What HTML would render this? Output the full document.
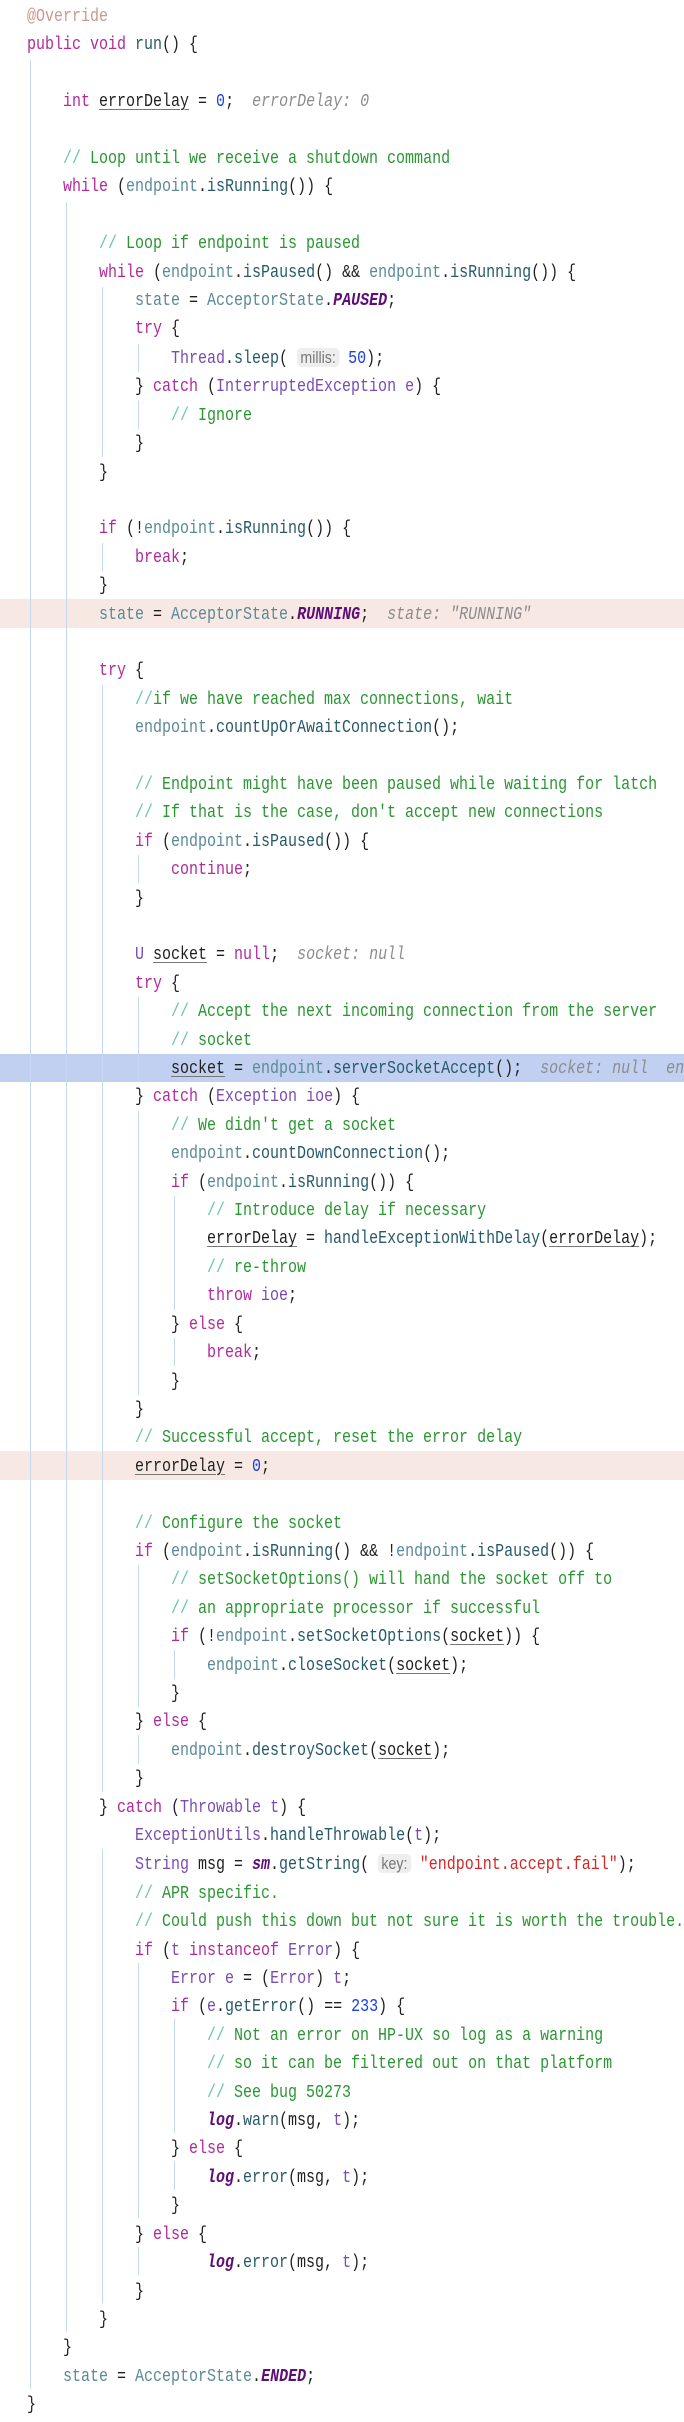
<!DOCTYPE html>
<html><head><meta charset="utf-8"><style>
html,body{margin:0;padding:0;background:#fff;width:684px;height:2422px;overflow:hidden;position:relative}
pre{position:absolute;left:27px;top:3px;margin:0;font-family:"Liberation Mono",monospace;font-size:18px;line-height:28.4px;color:#1f1f1f;transform:scaleX(0.8333);transform-origin:0 0;width:788px;overflow:hidden;z-index:2}
.hl{position:absolute;left:0;width:684px;height:28.4px;z-index:0}
.g{position:absolute;width:1px;background:#c4d7f7;z-index:1}
.k{color:#b02a9c}.c{color:#2a9632}.sl{color:#6cc3b0}.t{color:#7a4bb3}.v{color:#5a8a97}.m{color:#275a69}.n{color:#1a3fe0}.s{color:#d42828}
.cst{color:#5e0f77;font-style:italic;font-weight:bold}.h{color:#8c8c8c;font-style:italic}.an{color:#c89a90}
.u{text-decoration:underline;text-decoration-color:#777;text-underline-offset:3px}
.p{font-family:"Liberation Sans",sans-serif;color:#777;background:#eeeeee;border-radius:5px;padding:0 4px;font-size:17px}
</style></head><body>
<div class="hl" style="top:599.4px;background:#f7e8e3"></div>
<div class="hl" style="top:1053.8px;background:#c1d0f0"></div>
<div class="hl" style="top:1451.4px;background:#f7e8e3"></div>
<div class="g" style="left:30px;top:59.8px;height:2329px"></div>
<div class="g" style="left:66px;top:201.8px;height:2130px"></div>
<div class="g" style="left:102px;top:287px;height:170.4px"></div>
<div class="g" style="left:138px;top:343.8px;height:28.4px"></div>
<div class="g" style="left:138px;top:400.6px;height:28.4px"></div>
<div class="g" style="left:102px;top:542.6px;height:28.4px"></div>
<div class="g" style="left:102px;top:684.6px;height:1107.6px"></div>
<div class="g" style="left:138px;top:855px;height:28.4px"></div>
<div class="g" style="left:138px;top:997px;height:85.2px"></div>
<div class="g" style="left:138px;top:1110.6px;height:284px"></div>
<div class="g" style="left:174px;top:1196px;height:113.6px"></div>
<div class="g" style="left:174px;top:1337.6px;height:28.4px"></div>
<div class="g" style="left:138px;top:1565px;height:142px"></div>
<div class="g" style="left:174px;top:1650.2px;height:28.4px"></div>
<div class="g" style="left:138px;top:1735.4px;height:28.4px"></div>
<div class="g" style="left:102px;top:1849px;height:454.4px"></div>
<div class="g" style="left:138px;top:1962.6px;height:255.6px"></div>
<div class="g" style="left:174px;top:2019.4px;height:113.6px"></div>
<div class="g" style="left:174px;top:2161.4px;height:28.4px"></div>
<div class="g" style="left:138px;top:2246.6px;height:28.4px"></div>
<pre><span class="an">@Override</span>
<span class="k">public void</span> <span class="m">run</span>() {

    <span class="k">int</span> <span class="u">errorDelay</span> = <span class="n">0</span>;  <span class="h">errorDelay: 0</span>

    <span class="sl">//</span><span class="c"> Loop until we receive a shutdown command</span>
    <span class="k">while</span> (<span class="v">endpoint</span>.<span class="m">isRunning</span>()) {

        <span class="sl">//</span><span class="c"> Loop if endpoint is paused</span>
        <span class="k">while</span> (<span class="v">endpoint</span>.<span class="m">isPaused</span>() &amp;&amp; <span class="v">endpoint</span>.<span class="m">isRunning</span>()) {
            <span class="v">state</span> = <span class="v">AcceptorState</span>.<span class="cst">PAUSED</span>;
            <span class="k">try</span> {
                <span class="t">Thread</span>.<span class="m">sleep</span>( <span class="p">millis:</span> <span class="n">50</span>);
            } <span class="k">catch</span> (<span class="t">InterruptedException</span> <span class="t">e</span>) {
                <span class="sl">//</span><span class="c"> Ignore</span>
            }
        }

        <span class="k">if</span> (!<span class="v">endpoint</span>.<span class="m">isRunning</span>()) {
            <span class="k">break</span>;
        }
        <span class="v">state</span> = <span class="v">AcceptorState</span>.<span class="cst">RUNNING</span>;  <span class="h">state: "RUNNING"</span>

        <span class="k">try</span> {
            <span class="sl">//</span><span class="c">if we have reached max connections, wait</span>
            <span class="v">endpoint</span>.<span class="m">countUpOrAwaitConnection</span>();

            <span class="sl">//</span><span class="c"> Endpoint might have been paused while waiting for latch</span>
            <span class="sl">//</span><span class="c"> If that is the case, don't accept new connections</span>
            <span class="k">if</span> (<span class="v">endpoint</span>.<span class="m">isPaused</span>()) {
                <span class="k">continue</span>;
            }

            <span class="t">U</span> <span class="u">socket</span> = <span class="k">null</span>;  <span class="h">socket: null</span>
            <span class="k">try</span> {
                <span class="sl">//</span><span class="c"> Accept the next incoming connection from the server</span>
                <span class="sl">//</span><span class="c"> socket</span>
                <span class="u">socket</span> = <span class="v">endpoint</span>.<span class="m">serverSocketAccept</span>();  <span class="h">socket: null  en</span>
            } <span class="k">catch</span> (<span class="t">Exception</span> <span class="t">ioe</span>) {
                <span class="sl">//</span><span class="c"> We didn't get a socket</span>
                <span class="v">endpoint</span>.<span class="m">countDownConnection</span>();
                <span class="k">if</span> (<span class="v">endpoint</span>.<span class="m">isRunning</span>()) {
                    <span class="sl">//</span><span class="c"> Introduce delay if necessary</span>
                    <span class="u">errorDelay</span> = <span class="m">handleExceptionWithDelay</span>(<span class="u">errorDelay</span>);
                    <span class="sl">//</span><span class="c"> re-throw</span>
                    <span class="k">throw</span> <span class="t">ioe</span>;
                } <span class="k">else</span> {
                    <span class="k">break</span>;
                }
            }
            <span class="sl">//</span><span class="c"> Successful accept, reset the error delay</span>
            <span class="u">errorDelay</span> = <span class="n">0</span>;

            <span class="sl">//</span><span class="c"> Configure the socket</span>
            <span class="k">if</span> (<span class="v">endpoint</span>.<span class="m">isRunning</span>() &amp;&amp; !<span class="v">endpoint</span>.<span class="m">isPaused</span>()) {
                <span class="sl">//</span><span class="c"> setSocketOptions() will hand the socket off to</span>
                <span class="sl">//</span><span class="c"> an appropriate processor if successful</span>
                <span class="k">if</span> (!<span class="v">endpoint</span>.<span class="m">setSocketOptions</span>(<span class="u">socket</span>)) {
                    <span class="v">endpoint</span>.<span class="m">closeSocket</span>(<span class="u">socket</span>);
                }
            } <span class="k">else</span> {
                <span class="v">endpoint</span>.<span class="m">destroySocket</span>(<span class="u">socket</span>);
            }
        } <span class="k">catch</span> (<span class="t">Throwable</span> <span class="t">t</span>) {
            <span class="t">ExceptionUtils</span>.<span class="m">handleThrowable</span>(<span class="t">t</span>);
            <span class="t">String</span> msg = <span class="cst">sm</span>.<span class="m">getString</span>( <span class="p">key:</span> <span class="s">"endpoint.accept.fail"</span>);
            <span class="sl">//</span><span class="c"> APR specific.</span>
            <span class="sl">//</span><span class="c"> Could push this down but not sure it is worth the trouble.</span>
            <span class="k">if</span> (<span class="t">t</span> <span class="k">instanceof</span> <span class="t">Error</span>) {
                <span class="t">Error</span> <span class="t">e</span> = (<span class="t">Error</span>) <span class="t">t</span>;
                <span class="k">if</span> (<span class="t">e</span>.<span class="m">getError</span>() == <span class="n">233</span>) {
                    <span class="sl">//</span><span class="c"> Not an error on HP-UX so log as a warning</span>
                    <span class="sl">//</span><span class="c"> so it can be filtered out on that platform</span>
                    <span class="sl">//</span><span class="c"> See bug 50273</span>
                    <span class="cst">log</span>.<span class="m">warn</span>(msg, <span class="t">t</span>);
                } <span class="k">else</span> {
                    <span class="cst">log</span>.<span class="m">error</span>(msg, <span class="t">t</span>);
                }
            } <span class="k">else</span> {
                    <span class="cst">log</span>.<span class="m">error</span>(msg, <span class="t">t</span>);
            }
        }
    }
    <span class="v">state</span> = <span class="v">AcceptorState</span>.<span class="cst">ENDED</span>;
}</pre>
</body></html>
